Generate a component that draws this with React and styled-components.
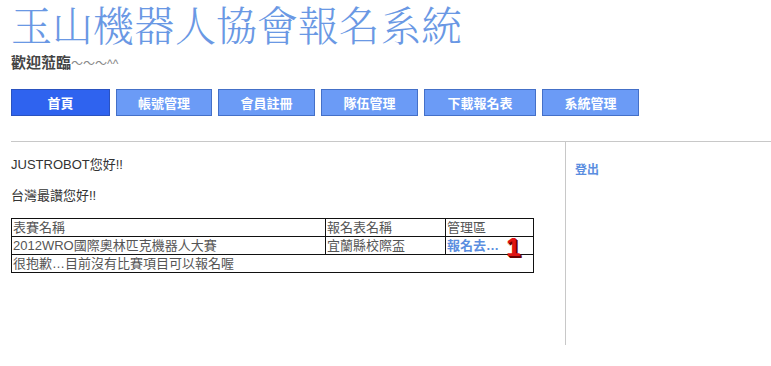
import React from "react";
import styled, { createGlobalStyle } from "styled-components";

const GlobalStyle = createGlobalStyle`
  body {
    margin: 0;
    background: #fff;
    font-family: "Liberation Sans", "Noto Sans CJK TC", sans-serif;
  }
`;

const navItems = [
  { label: "首頁", width: 99 },
  { label: "帳號管理", width: 96 },
  { label: "會員註冊", width: 97 },
  { label: "隊伍管理", width: 97 },
  { label: "下載報名表", width: 112 },
  { label: "系統管理", width: 97 },
];

const App = () => {
  return (
    <>
      <GlobalStyle />
      <Page>
        <Title>玉山機器人協會報名系統</Title>
        <Welcome>
          歡迎蒞臨<Tilde>〜〜〜^^</Tilde>
        </Welcome>
        <Nav>
          {navItems.map((item, i) => (
            <NavButton key={item.label} active={i === 0} $width={item.width}>
              {item.label}
            </NavButton>
          ))}
        </Nav>
        <Main>
          <Content>
            <Greeting>JUSTROBOT您好!!</Greeting>
            <Greeting>台灣最讚您好!!</Greeting>
            <Table>
              <colgroup>
                <col style={{ width: 314 }} />
                <col style={{ width: 120 }} />
                <col />
              </colgroup>
              <tbody>
                <tr>
                  <Cell>表賽名稱</Cell>
                  <Cell>報名表名稱</Cell>
                  <Cell>管理區</Cell>
                </tr>
                <tr>
                  <Cell>2012WRO國際奧林匹克機器人大賽</Cell>
                  <Cell>宜蘭縣校際盃</Cell>
                  <Cell>
                    <SignUp>報名去…</SignUp>
                    <Badge>1</Badge>
                  </Cell>
                </tr>
                <tr>
                  <Cell colSpan={3}>很抱歉…目前沒有比賽項目可以報名喔</Cell>
                </tr>
              </tbody>
            </Table>
          </Content>
          <Sidebar>
            <Logout>登出</Logout>
          </Sidebar>
        </Main>
      </Page>
    </>
  );
};

export default App;

const Page = styled.div`
  padding-left: 11px;
`;

const Title = styled.h1`
  margin: 0;
  padding-top: 3px;
  font-family: "Liberation Serif", "Noto Serif CJK TC", "Noto Sans CJK TC", serif;
  font-weight: 300;
  font-size: 41px;
  line-height: 48px;
  color: #6a98e4;
`;

const Welcome = styled.div`
  margin-top: 2px;
  font-size: 15px;
  font-weight: bold;
  color: #444;
  line-height: 20px;
`;

const Tilde = styled.span`
  font-weight: normal;
  color: #888;
  font-size: 12px;
`;

const Nav = styled.div`
  display: flex;
  gap: 6px;
  margin-top: 15px;
`;

const NavButton = styled.div`
  box-sizing: border-box;
  width: ${(p) => p.$width}px;
  height: 27px;
  display: flex;
  align-items: center;
  justify-content: center;
  background: ${(p) => (p.active ? "#2f63ef" : "#6b9bf6")};
  border: 1px solid ${(p) => (p.active ? "#2a52c0" : "#4470c8")};
  color: #fff;
  font-size: 13px;
  font-weight: bold;
  font-family: "Noto Sans CJK TC", sans-serif;
  cursor: pointer;
`;

const Main = styled.div`
  display: flex;
  margin-top: 25px;
  border-top: 1px solid #c8c8c8;
`;

const Content = styled.div`
  box-sizing: border-box;
  width: 555px;
  height: 203px;
  border-right: 1px solid #c8c8c8;
  padding-top: 14px;
`;

const Greeting = styled.p`
  margin: 0 0 14px;
  font-size: 13px;
  line-height: 17px;
  color: #333;
`;

const Table = styled.table`
  margin-top: 1px;
  width: 523px;
  border-collapse: collapse;
  table-layout: fixed;
`;

const Cell = styled.td`
  border: 1px solid #111;
  padding: 0 1px;
  height: 17px;
  font-size: 13px;
  line-height: 17px;
  color: #555;
  white-space: nowrap;
  position: relative;
`;

const SignUp = styled.a`
  color: #5b8ee0;
  font-weight: bold;
  cursor: pointer;
`;

const Badge = styled.span`
  position: absolute;
  left: 60px;
  top: -1px;
  font-family: "Liberation Sans", sans-serif;
  font-weight: 900;
  font-size: 26px;
  line-height: 22px;
  color: #e01414;
  text-shadow: 1px 1px 0 #6a0000, 2px 2px 0 #6a0000;
`;

const Sidebar = styled.div`
  padding: 18px 0 0 9px;
`;

const Logout = styled.a`
  color: #5b8ee0;
  font-weight: bold;
  font-size: 12px;
  cursor: pointer;
`;
